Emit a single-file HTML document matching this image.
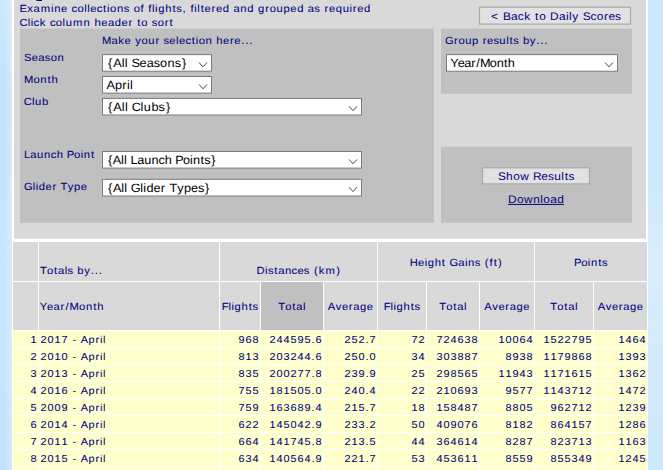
<!DOCTYPE html>
<html><head><meta charset="utf-8"><title>Flight Collections</title>
<style>
html,body{margin:0;padding:0}
body{width:663px;height:470px;overflow:hidden;position:relative;font-family:"Liberation Sans",sans-serif;
background:#c8e6fc;}
#pg div{position:absolute;box-sizing:content-box}
svg{position:absolute;left:0;top:0}
text{font-family:"Liberation Sans",sans-serif;white-space:pre;text-rendering:geometricPrecision}
</style></head><body>
<div id="pg">
<div style="left:648px;top:0;width:15px;height:470px;background:linear-gradient(180deg,#cbe8fc 0%,#cde9fc 35%,#d8eefd 56%,#d3ebfc 75%,#cee9fc 100%)"></div>
<div style="left:0;top:0;width:12px;height:470px;background:linear-gradient(90deg,rgba(255,255,255,0) 0%,rgba(255,255,255,0) 40%,rgba(255,255,255,.28) 100%),linear-gradient(180deg,#ceE9fc 0%,#c2e3fb 20%,#c7e5fc 50%,#c6e5fc 80%,#c2e3fb 100%)"></div>
<div style="left:12px;top:0px;width:636px;height:470px;background:#fff;"></div>
<div style="left:14px;top:0px;width:632px;height:238px;background:#d9d9d9;"></div>
<div style="left:36px;top:0px;width:2px;height:1px;background:#3a3a80;"></div>
<div style="left:38px;top:0px;width:4px;height:1px;background:#000066;"></div>
<div style="left:13px;top:242px;width:25px;height:39px;background:#d9d9d9;"></div>
<div style="left:39px;top:242px;width:180px;height:39px;background:#d9d9d9;"></div>
<div style="left:220px;top:242px;width:157px;height:39px;background:#d9d9d9;"></div>
<div style="left:378px;top:242px;width:156px;height:39px;background:#d9d9d9;"></div>
<div style="left:535px;top:242px;width:112px;height:39px;background:#d9d9d9;"></div>
<div style="left:13px;top:282px;width:25px;height:48px;background:#d9d9d9;"></div>
<div style="left:39px;top:282px;width:180px;height:48px;background:#d9d9d9;"></div>
<div style="left:220px;top:282px;width:40px;height:48px;background:#d9d9d9;"></div>
<div style="left:261px;top:282px;width:62px;height:48px;background:#c0c0c0;"></div>
<div style="left:324px;top:282px;width:53px;height:48px;background:#d9d9d9;"></div>
<div style="left:378px;top:282px;width:48px;height:48px;background:#d9d9d9;"></div>
<div style="left:427px;top:282px;width:52px;height:48px;background:#d9d9d9;"></div>
<div style="left:480px;top:282px;width:54px;height:48px;background:#d9d9d9;"></div>
<div style="left:535px;top:282px;width:58px;height:48px;background:#d9d9d9;"></div>
<div style="left:594px;top:282px;width:53px;height:48px;background:#d9d9d9;"></div>
<div style="left:13px;top:331px;width:25px;height:16px;background:#ffffcc;"></div>
<div style="left:39px;top:331px;width:180px;height:16px;background:#ffffcc;"></div>
<div style="left:220px;top:331px;width:40px;height:16px;background:#ffffcc;"></div>
<div style="left:261px;top:331px;width:62px;height:16px;background:#ffffcc;"></div>
<div style="left:324px;top:331px;width:53px;height:16px;background:#ffffcc;"></div>
<div style="left:378px;top:331px;width:48px;height:16px;background:#ffffcc;"></div>
<div style="left:427px;top:331px;width:52px;height:16px;background:#ffffcc;"></div>
<div style="left:480px;top:331px;width:54px;height:16px;background:#ffffcc;"></div>
<div style="left:535px;top:331px;width:58px;height:16px;background:#ffffcc;"></div>
<div style="left:594px;top:331px;width:53px;height:16px;background:#ffffcc;"></div>
<div style="left:13px;top:348px;width:25px;height:16px;background:#ffffcc;"></div>
<div style="left:39px;top:348px;width:180px;height:16px;background:#ffffcc;"></div>
<div style="left:220px;top:348px;width:40px;height:16px;background:#ffffcc;"></div>
<div style="left:261px;top:348px;width:62px;height:16px;background:#ffffcc;"></div>
<div style="left:324px;top:348px;width:53px;height:16px;background:#ffffcc;"></div>
<div style="left:378px;top:348px;width:48px;height:16px;background:#ffffcc;"></div>
<div style="left:427px;top:348px;width:52px;height:16px;background:#ffffcc;"></div>
<div style="left:480px;top:348px;width:54px;height:16px;background:#ffffcc;"></div>
<div style="left:535px;top:348px;width:58px;height:16px;background:#ffffcc;"></div>
<div style="left:594px;top:348px;width:53px;height:16px;background:#ffffcc;"></div>
<div style="left:13px;top:365px;width:25px;height:16px;background:#ffffcc;"></div>
<div style="left:39px;top:365px;width:180px;height:16px;background:#ffffcc;"></div>
<div style="left:220px;top:365px;width:40px;height:16px;background:#ffffcc;"></div>
<div style="left:261px;top:365px;width:62px;height:16px;background:#ffffcc;"></div>
<div style="left:324px;top:365px;width:53px;height:16px;background:#ffffcc;"></div>
<div style="left:378px;top:365px;width:48px;height:16px;background:#ffffcc;"></div>
<div style="left:427px;top:365px;width:52px;height:16px;background:#ffffcc;"></div>
<div style="left:480px;top:365px;width:54px;height:16px;background:#ffffcc;"></div>
<div style="left:535px;top:365px;width:58px;height:16px;background:#ffffcc;"></div>
<div style="left:594px;top:365px;width:53px;height:16px;background:#ffffcc;"></div>
<div style="left:13px;top:382px;width:25px;height:16px;background:#ffffcc;"></div>
<div style="left:39px;top:382px;width:180px;height:16px;background:#ffffcc;"></div>
<div style="left:220px;top:382px;width:40px;height:16px;background:#ffffcc;"></div>
<div style="left:261px;top:382px;width:62px;height:16px;background:#ffffcc;"></div>
<div style="left:324px;top:382px;width:53px;height:16px;background:#ffffcc;"></div>
<div style="left:378px;top:382px;width:48px;height:16px;background:#ffffcc;"></div>
<div style="left:427px;top:382px;width:52px;height:16px;background:#ffffcc;"></div>
<div style="left:480px;top:382px;width:54px;height:16px;background:#ffffcc;"></div>
<div style="left:535px;top:382px;width:58px;height:16px;background:#ffffcc;"></div>
<div style="left:594px;top:382px;width:53px;height:16px;background:#ffffcc;"></div>
<div style="left:13px;top:399px;width:25px;height:16px;background:#ffffcc;"></div>
<div style="left:39px;top:399px;width:180px;height:16px;background:#ffffcc;"></div>
<div style="left:220px;top:399px;width:40px;height:16px;background:#ffffcc;"></div>
<div style="left:261px;top:399px;width:62px;height:16px;background:#ffffcc;"></div>
<div style="left:324px;top:399px;width:53px;height:16px;background:#ffffcc;"></div>
<div style="left:378px;top:399px;width:48px;height:16px;background:#ffffcc;"></div>
<div style="left:427px;top:399px;width:52px;height:16px;background:#ffffcc;"></div>
<div style="left:480px;top:399px;width:54px;height:16px;background:#ffffcc;"></div>
<div style="left:535px;top:399px;width:58px;height:16px;background:#ffffcc;"></div>
<div style="left:594px;top:399px;width:53px;height:16px;background:#ffffcc;"></div>
<div style="left:13px;top:416px;width:25px;height:16px;background:#ffffcc;"></div>
<div style="left:39px;top:416px;width:180px;height:16px;background:#ffffcc;"></div>
<div style="left:220px;top:416px;width:40px;height:16px;background:#ffffcc;"></div>
<div style="left:261px;top:416px;width:62px;height:16px;background:#ffffcc;"></div>
<div style="left:324px;top:416px;width:53px;height:16px;background:#ffffcc;"></div>
<div style="left:378px;top:416px;width:48px;height:16px;background:#ffffcc;"></div>
<div style="left:427px;top:416px;width:52px;height:16px;background:#ffffcc;"></div>
<div style="left:480px;top:416px;width:54px;height:16px;background:#ffffcc;"></div>
<div style="left:535px;top:416px;width:58px;height:16px;background:#ffffcc;"></div>
<div style="left:594px;top:416px;width:53px;height:16px;background:#ffffcc;"></div>
<div style="left:13px;top:433px;width:25px;height:16px;background:#ffffcc;"></div>
<div style="left:39px;top:433px;width:180px;height:16px;background:#ffffcc;"></div>
<div style="left:220px;top:433px;width:40px;height:16px;background:#ffffcc;"></div>
<div style="left:261px;top:433px;width:62px;height:16px;background:#ffffcc;"></div>
<div style="left:324px;top:433px;width:53px;height:16px;background:#ffffcc;"></div>
<div style="left:378px;top:433px;width:48px;height:16px;background:#ffffcc;"></div>
<div style="left:427px;top:433px;width:52px;height:16px;background:#ffffcc;"></div>
<div style="left:480px;top:433px;width:54px;height:16px;background:#ffffcc;"></div>
<div style="left:535px;top:433px;width:58px;height:16px;background:#ffffcc;"></div>
<div style="left:594px;top:433px;width:53px;height:16px;background:#ffffcc;"></div>
<div style="left:13px;top:450px;width:25px;height:16px;background:#ffffcc;"></div>
<div style="left:39px;top:450px;width:180px;height:16px;background:#ffffcc;"></div>
<div style="left:220px;top:450px;width:40px;height:16px;background:#ffffcc;"></div>
<div style="left:261px;top:450px;width:62px;height:16px;background:#ffffcc;"></div>
<div style="left:324px;top:450px;width:53px;height:16px;background:#ffffcc;"></div>
<div style="left:378px;top:450px;width:48px;height:16px;background:#ffffcc;"></div>
<div style="left:427px;top:450px;width:52px;height:16px;background:#ffffcc;"></div>
<div style="left:480px;top:450px;width:54px;height:16px;background:#ffffcc;"></div>
<div style="left:535px;top:450px;width:58px;height:16px;background:#ffffcc;"></div>
<div style="left:594px;top:450px;width:53px;height:16px;background:#ffffcc;"></div>
<div style="left:13px;top:467px;width:25px;height:3px;background:#ffffcc;"></div>
<div style="left:39px;top:467px;width:180px;height:3px;background:#ffffcc;"></div>
<div style="left:220px;top:467px;width:40px;height:3px;background:#ffffcc;"></div>
<div style="left:261px;top:467px;width:62px;height:3px;background:#ffffcc;"></div>
<div style="left:324px;top:467px;width:53px;height:3px;background:#ffffcc;"></div>
<div style="left:378px;top:467px;width:48px;height:3px;background:#ffffcc;"></div>
<div style="left:427px;top:467px;width:52px;height:3px;background:#ffffcc;"></div>
<div style="left:480px;top:467px;width:54px;height:3px;background:#ffffcc;"></div>
<div style="left:535px;top:467px;width:58px;height:3px;background:#ffffcc;"></div>
<div style="left:594px;top:467px;width:53px;height:3px;background:#ffffcc;"></div>
</div>
<svg width="663" height="470" viewBox="0 0 663 470">
<rect x="14" y="237.9" width="632.0" height="0.8" fill="#d9d9d9"/>
<rect x="20.1" y="28.6" width="413.8" height="194.2" fill="#c0c0c0"/>
<rect x="441" y="28.6" width="191.0" height="65.1" fill="#c0c0c0"/>
<rect x="441" y="146.8" width="191.0" height="76.0" fill="#c0c0c0"/>
<rect x="102.5" y="54.6" width="109" height="16.6" fill="#fff" stroke="#7a7a7a" stroke-width="1"/>
<rect x="102.5" y="76.5" width="109" height="16.6" fill="#fff" stroke="#7a7a7a" stroke-width="1"/>
<rect x="102.5" y="98.4" width="259" height="16.6" fill="#fff" stroke="#7a7a7a" stroke-width="1"/>
<rect x="102.5" y="151.5" width="259" height="16.6" fill="#fff" stroke="#7a7a7a" stroke-width="1"/>
<rect x="102.5" y="179.3" width="259" height="16.7" fill="#fff" stroke="#7a7a7a" stroke-width="1"/>
<rect x="446.5" y="54.6" width="171" height="16.6" fill="#fff" stroke="#7a7a7a" stroke-width="1"/>
<rect x="479.5" y="7.2" width="151" height="16.9" fill="#e2e2e2" stroke="#a9a9a9" stroke-width="1.2"/>
<rect x="482.5" y="167.8" width="107" height="16.1" fill="#e2e2e2" stroke="#a9a9a9" stroke-width="1.2"/>
<text transform="translate(19.7 12.0) scale(1.08 1)" x="-0.22 6.95 12.80 19.46 29.05 31.98 38.31" font-size="10.4" fill="#000080" stroke="#000080" stroke-width="0.06">Examine</text>
<text transform="translate(71.4 12.0) scale(1.08 1)" x="0.08 5.59 11.86 14.68 17.42 23.46 29.33 33.05 35.85 42.23 48.46" font-size="10.4" fill="#000080" stroke="#000080" stroke-width="0.06">collections</text>
<text transform="translate(133.4 12.0) scale(1.08 1)" x="0.23 6.61" font-size="10.4" fill="#000080" stroke="#000080" stroke-width="0.06">of</text>
<text transform="translate(147.9 12.0) scale(1.08 1)" x="0.37 3.88 6.70 9.58 16.04 22.77 26.32 32.03" font-size="10.4" fill="#000080" stroke="#000080" stroke-width="0.06">flights,</text>
<text transform="translate(190.0 12.0) scale(1.08 1)" x="0.37 3.88 6.70 9.85 13.49 19.92 24.02 30.29" font-size="10.4" fill="#000080" stroke="#000080" stroke-width="0.06">filtered</text>
<text transform="translate(233.3 12.0) scale(1.08 1)" x="0.20 6.55 13.01" font-size="10.4" fill="#000080" stroke="#000080" stroke-width="0.06">and</text>
<text transform="translate(257.8 12.0) scale(1.08 1)" x="0.31 6.88 11.04 17.42 23.88 30.15 36.43" font-size="10.4" fill="#000080" stroke="#000080" stroke-width="0.06">grouped</text>
<text transform="translate(307.6 12.0) scale(1.08 1)" x="0.20 6.27" font-size="10.4" fill="#000080" stroke="#000080" stroke-width="0.06">as</text>
<text transform="translate(324.0 12.0) scale(1.08 1)" x="0.47 4.57 10.84 17.31 23.71 26.74 30.84 37.12" font-size="10.4" fill="#000080" stroke="#000080" stroke-width="0.06">required</text>
<text transform="translate(19.7 25.9) scale(1.08 1)" x="-0.17 7.43 10.25 12.89 18.61" font-size="10.4" fill="#000080" stroke="#000080" stroke-width="0.06">Click</text>
<text transform="translate(49.8 25.9) scale(1.08 1)" x="0.08 5.58 11.85 14.78 21.59 31.29" font-size="10.4" fill="#000080" stroke="#000080" stroke-width="0.06">column</text>
<text transform="translate(94.1 25.9) scale(1.08 1)" x="0.36 6.68 12.83 19.12 25.39 31.81" font-size="10.4" fill="#000080" stroke="#000080" stroke-width="0.06">header</text>
<text transform="translate(136.6 25.9) scale(1.08 1)" x="0.58 4.28" font-size="10.4" fill="#000080" stroke="#000080" stroke-width="0.06">to</text>
<text transform="translate(151.7 25.9) scale(1.08 1)" x="0.08 5.58 12.06 16.57" font-size="10.4" fill="#000080" stroke="#000080" stroke-width="0.06">sort</text>
<text transform="translate(102.0 44.0) scale(1.08 1)" x="-0.04 8.76 15.12 20.88" font-size="10.4" fill="#000080" stroke="#000080" stroke-width="0.06">Make</text>
<text transform="translate(134.8 44.0) scale(1.08 1)" x="0.41 6.23 12.54 19.10" font-size="10.4" fill="#000080" stroke="#000080" stroke-width="0.06">your</text>
<text transform="translate(163.5 44.0) scale(1.08 1)" x="0.05 5.45 11.62 14.31 20.29 26.11 29.80 32.55 38.86" font-size="10.4" fill="#000080" stroke="#000080" stroke-width="0.06">selection</text>
<text transform="translate(216.0 44.0) scale(1.08 1)" x="0.33 6.59 12.96 17.01 23.35 27.05 30.76" font-size="10.4" fill="#000080" stroke="#000080" stroke-width="0.06">here...</text>
<text transform="translate(445.2 44.0) scale(1.08 1)" x="-0.15 8.20 12.24 18.47 24.79" font-size="10.4" fill="#000080" stroke="#000080" stroke-width="0.06">Group</text>
<text transform="translate(482.3 44.0) scale(1.08 1)" x="0.41 4.40 10.30 15.81 22.10 25.17 28.62" font-size="10.4" fill="#000080" stroke="#000080" stroke-width="0.06">results</text>
<text transform="translate(522.7 44.0) scale(1.08 1)" x="0.24 6.64 12.60 16.26 19.92" font-size="10.4" fill="#000080" stroke="#000080" stroke-width="0.06">by...</text>
<text transform="translate(24.0 61.2) scale(1.08 1)" x="0.01 7.11 13.21 19.21 24.66 30.98" font-size="10.4" fill="#000080" stroke="#000080" stroke-width="0.06">Season</text>
<text transform="translate(24.0 83.2) scale(1.08 1)" x="-0.04 8.79 15.10 21.78 25.56" font-size="10.4" fill="#000080" stroke="#000080" stroke-width="0.06">Month</text>
<text transform="translate(24.0 105.2) scale(1.08 1)" x="-0.20 7.35 10.23 16.63" font-size="10.4" fill="#000080" stroke="#000080" stroke-width="0.06">Club</text>
<text transform="translate(24.0 158.3) scale(1.08 1)" x="-0.06 5.84 12.13 18.57 24.74 30.33" font-size="10.4" fill="#000080" stroke="#000080" stroke-width="0.06">Launch</text>
<text transform="translate(67.2 158.3) scale(1.08 1)" x="-0.40 6.34 12.56 15.45 22.12" font-size="10.4" fill="#000080" stroke="#000080" stroke-width="0.06">Point</text>
<text transform="translate(24.0 190.2) scale(1.08 1)" x="-0.10 8.13 10.92 13.76 19.96 26.33" font-size="10.4" fill="#000080" stroke="#000080" stroke-width="0.06">Glider</text>
<text transform="translate(60.5 190.2) scale(1.08 1)" x="-0.04 6.69 12.58 18.79" font-size="10.4" fill="#000080" stroke="#000080" stroke-width="0.06">Type</text>
<text transform="translate(106.9 67.0) scale(1.06 1)" x="1.07 5.99 13.98 16.91" font-size="12.0" fill="#000">{All</text>
<text transform="translate(132.0 67.0) scale(1.06 1)" x="-0.43 7.18 13.92 20.48 26.48 33.54 40.31 47.23" font-size="12.0" fill="#000">Seasons}</text>
<text transform="translate(106.9 88.9) scale(1.06 1)" x="-0.27 7.57 14.59 18.92 21.77" font-size="12.0" fill="#000">April</text>
<text transform="translate(106.9 110.8) scale(1.06 1)" x="1.09 6.06 14.07 17.03" font-size="12.0" fill="#000">{All</text>
<text transform="translate(132.2 110.8) scale(1.06 1)" x="-0.46 7.89 10.97 18.13 24.91 31.88" font-size="12.0" fill="#000">Clubs}</text>
<text transform="translate(106.9 163.9) scale(1.06 1)" x="0.93 5.53 13.26 16.06" font-size="12.0" fill="#000">{All</text>
<text transform="translate(130.9 163.9) scale(1.06 1)" x="-0.29 5.95 12.57 19.39 25.95 31.84" font-size="12.0" fill="#000">Launch</text>
<text transform="translate(175.8 163.9) scale(1.06 1)" x="-0.64 6.71 13.43 16.24 23.35 26.79 33.44" font-size="12.0" fill="#000">Points}</text>
<text transform="translate(106.9 191.7) scale(1.06 1)" x="0.99 5.74 13.59 16.45" font-size="12.0" fill="#000">{All</text>
<text transform="translate(131.4 191.7) scale(1.06 1)" x="-0.50 8.43 11.29 14.17 20.91 27.79" font-size="12.0" fill="#000">Glider</text>
<text transform="translate(169.5 191.7) scale(1.06 1)" x="-0.02 7.40 13.63 20.38 26.79 33.57" font-size="12.0" fill="#000">Types}</text>
<text transform="translate(450.9 67.0) scale(1.06 1)" x="-0.62 6.52 12.70 19.23 23.92 27.36 36.73 43.20 50.10 53.67" font-size="12.0" fill="#000">Year/Month</text>
<text transform="translate(489.7 19.8) scale(1.08 1)" x="1.12" font-size="11.0" fill="#000080">&lt;</text>
<text transform="translate(503.1 19.8) scale(1.08 1)" x="-0.04 7.38 13.63 19.52" font-size="11.0" fill="#000080">Back</text>
<text transform="translate(534.5 19.8) scale(1.08 1)" x="0.56 4.32" font-size="11.0" fill="#000080">to</text>
<text transform="translate(550.0 19.8) scale(1.08 1)" x="0.11 8.28 14.75 17.65 20.70" font-size="11.0" fill="#000080">Daily</text>
<text transform="translate(582.7 19.8) scale(1.08 1)" x="-0.05 7.25 12.91 19.61 23.79 30.01" font-size="11.0" fill="#000080">Scores</text>
<text transform="translate(498.0 180.0) scale(1.08 1)" x="-0.06 7.49 14.02 20.62" font-size="11.0" fill="#000080">Show</text>
<text transform="translate(533.2 180.0) scale(1.08 1)" x="-0.31 7.41 13.61 19.38 26.00 29.21 32.81" font-size="11.0" fill="#000080">Results</text>
<text transform="translate(508.0 202.5) scale(1.08 1)" x="0.08 8.23 14.81 23.35 29.95 32.74 39.09 45.52" font-size="11.0" fill="#000080">Download</text>
<rect x="508" y="203.9" width="56" height="1" fill="#000080"/>
<text transform="translate(40.0 274.0) scale(1.08 1)" x="-0.04 6.47 13.02 16.64 22.83 25.43" font-size="10.4" fill="#000080" stroke="#000080" stroke-width="0.06">Totals</text>
<text transform="translate(77.0 274.0) scale(1.08 1)" x="0.28 6.76 12.78 16.49 20.20" font-size="10.4" fill="#000080" stroke="#000080" stroke-width="0.06">by...</text>
<text transform="translate(256.4 274.0) scale(1.08 1)" x="0.17 8.09 10.70 16.51 20.13 26.42 32.58 37.98 43.96" font-size="10.4" fill="#000080" stroke="#000080" stroke-width="0.06">Distances</text>
<text transform="translate(313.4 274.0) scale(1.08 1)" x="0.58 5.04 11.28 21.14" font-size="10.4" fill="#000080" stroke="#000080" stroke-width="0.06">(km)</text>
<text transform="translate(409.6 266.0) scale(1.08 1)" x="0.07 7.79 13.96 16.79 23.19 29.86" font-size="10.4" fill="#000080" stroke="#000080" stroke-width="0.06">Height</text>
<text transform="translate(449.5 266.0) scale(1.08 1)" x="-0.10 8.06 14.25 17.14 23.31" font-size="10.4" fill="#000080" stroke="#000080" stroke-width="0.06">Gains</text>
<text transform="translate(484.2 266.0) scale(1.08 1)" x="0.58 4.97 8.77 12.80" font-size="10.4" fill="#000080" stroke="#000080" stroke-width="0.06">(ft)</text>
<text transform="translate(574.3 266.0) scale(1.08 1)" x="-0.40 6.34 12.56 15.45 22.12 25.63" font-size="10.4" fill="#000080" stroke="#000080" stroke-width="0.06">Points</text>
<text transform="translate(40.0 310.0) scale(1.08 1)" x="-0.34 6.41 12.50 18.90 23.67 27.39 36.21 42.53 49.21 52.99" font-size="10.4" fill="#000080" stroke="#000080" stroke-width="0.06">Year/Month</text>
<text transform="translate(221.9 310.0) scale(1.08 1)" x="-0.25 6.10 8.89 11.72 18.12 24.79 28.30" font-size="10.4" fill="#000080" stroke="#000080" stroke-width="0.06">Flights</text>
<text transform="translate(278.3 310.0) scale(1.08 1)" x="-0.04 6.47 13.02 16.64 22.83" font-size="10.4" fill="#000080" stroke="#000080" stroke-width="0.06">Total</text>
<text transform="translate(327.8 310.0) scale(1.08 1)" x="0.01 7.38 13.14 19.51 23.58 29.82 36.03" font-size="10.4" fill="#000080" stroke="#000080" stroke-width="0.06">Average</text>
<text transform="translate(383.9 310.0) scale(1.08 1)" x="-0.25 6.10 8.89 11.72 18.12 24.79 28.30" font-size="10.4" fill="#000080" stroke="#000080" stroke-width="0.06">Flights</text>
<text transform="translate(439.3 310.0) scale(1.08 1)" x="-0.04 6.47 13.02 16.64 22.83" font-size="10.4" fill="#000080" stroke="#000080" stroke-width="0.06">Total</text>
<text transform="translate(484.3 310.0) scale(1.08 1)" x="0.01 7.38 13.14 19.51 23.58 29.82 36.03" font-size="10.4" fill="#000080" stroke="#000080" stroke-width="0.06">Average</text>
<text transform="translate(550.3 310.0) scale(1.08 1)" x="-0.04 6.47 13.02 16.64 22.83" font-size="10.4" fill="#000080" stroke="#000080" stroke-width="0.06">Total</text>
<text transform="translate(597.8 310.0) scale(1.08 1)" x="0.01 7.38 13.14 19.51 23.58 29.82 36.03" font-size="10.4" fill="#000080" stroke="#000080" stroke-width="0.06">Average</text>
<text transform="translate(30.0 343.0) scale(1.08 1)" x="0.43" font-size="10.1" fill="#000080" stroke="#000080" stroke-width="0.06">1</text>
<text transform="translate(40.0 343.0) scale(1.08 1)" x="0.43 6.91 13.39 19.86" font-size="10.1" fill="#000080" stroke="#000080" stroke-width="0.06">2017</text>
<text transform="translate(71.9 343.0) scale(1.08 1)" x="0.63" font-size="10.1" fill="#000080" stroke="#000080" stroke-width="0.06">-</text>
<text transform="translate(80.7 343.0) scale(1.08 1)" x="0.11 7.33 13.81 17.93 20.73" font-size="10.1" fill="#000080" stroke="#000080" stroke-width="0.06">April</text>
<text transform="translate(238.0 343.0) scale(1.08 1)" x="0.43 6.91 13.39" font-size="10.1" fill="#000080" stroke="#000080" stroke-width="0.06">968</text>
<text transform="translate(269.0 343.0) scale(1.08 1)" x="0.43 6.91 13.39 19.86 26.34 32.82 39.32 43.00" font-size="10.1" fill="#000080" stroke="#000080" stroke-width="0.06">244595.6</text>
<text transform="translate(344.0 343.0) scale(1.08 1)" x="0.43 6.91 13.39 19.88 23.57" font-size="10.1" fill="#000080" stroke="#000080" stroke-width="0.06">252.7</text>
<text transform="translate(411.0 343.0) scale(1.08 1)" x="0.43 6.91" font-size="10.1" fill="#000080" stroke="#000080" stroke-width="0.06">72</text>
<text transform="translate(436.0 343.0) scale(1.08 1)" x="0.43 6.91 13.39 19.86 26.34 32.82" font-size="10.1" fill="#000080" stroke="#000080" stroke-width="0.06">724638</text>
<text transform="translate(498.0 343.0) scale(1.08 1)" x="0.43 6.91 13.39 19.86 26.34" font-size="10.1" fill="#000080" stroke="#000080" stroke-width="0.06">10064</text>
<text transform="translate(543.0 343.0) scale(1.08 1)" x="0.43 6.91 13.39 19.86 26.34 32.82 39.30" font-size="10.1" fill="#000080" stroke="#000080" stroke-width="0.06">1522795</text>
<text transform="translate(618.0 343.0) scale(1.08 1)" x="0.43 6.91 13.39 19.86" font-size="10.1" fill="#000080" stroke="#000080" stroke-width="0.06">1464</text>
<text transform="translate(30.0 360.0) scale(1.08 1)" x="0.43" font-size="10.1" fill="#000080" stroke="#000080" stroke-width="0.06">2</text>
<text transform="translate(40.0 360.0) scale(1.08 1)" x="0.43 6.91 13.39 19.86" font-size="10.1" fill="#000080" stroke="#000080" stroke-width="0.06">2010</text>
<text transform="translate(71.9 360.0) scale(1.08 1)" x="0.63" font-size="10.1" fill="#000080" stroke="#000080" stroke-width="0.06">-</text>
<text transform="translate(80.7 360.0) scale(1.08 1)" x="0.11 7.33 13.81 17.93 20.73" font-size="10.1" fill="#000080" stroke="#000080" stroke-width="0.06">April</text>
<text transform="translate(238.0 360.0) scale(1.08 1)" x="0.43 6.91 13.39" font-size="10.1" fill="#000080" stroke="#000080" stroke-width="0.06">813</text>
<text transform="translate(269.0 360.0) scale(1.08 1)" x="0.43 6.91 13.39 19.86 26.34 32.82 39.32 43.00" font-size="10.1" fill="#000080" stroke="#000080" stroke-width="0.06">203244.6</text>
<text transform="translate(344.0 360.0) scale(1.08 1)" x="0.43 6.91 13.39 19.88 23.57" font-size="10.1" fill="#000080" stroke="#000080" stroke-width="0.06">250.0</text>
<text transform="translate(411.0 360.0) scale(1.08 1)" x="0.43 6.91" font-size="10.1" fill="#000080" stroke="#000080" stroke-width="0.06">34</text>
<text transform="translate(436.0 360.0) scale(1.08 1)" x="0.43 6.91 13.39 19.86 26.34 32.82" font-size="10.1" fill="#000080" stroke="#000080" stroke-width="0.06">303887</text>
<text transform="translate(505.0 360.0) scale(1.08 1)" x="0.43 6.91 13.39 19.86" font-size="10.1" fill="#000080" stroke="#000080" stroke-width="0.06">8938</text>
<text transform="translate(543.0 360.0) scale(1.08 1)" x="0.43 6.91 13.39 19.86 26.34 32.82 39.30" font-size="10.1" fill="#000080" stroke="#000080" stroke-width="0.06">1179868</text>
<text transform="translate(618.0 360.0) scale(1.08 1)" x="0.43 6.91 13.39 19.86" font-size="10.1" fill="#000080" stroke="#000080" stroke-width="0.06">1393</text>
<text transform="translate(30.0 377.0) scale(1.08 1)" x="0.43" font-size="10.1" fill="#000080" stroke="#000080" stroke-width="0.06">3</text>
<text transform="translate(40.0 377.0) scale(1.08 1)" x="0.43 6.91 13.39 19.86" font-size="10.1" fill="#000080" stroke="#000080" stroke-width="0.06">2013</text>
<text transform="translate(71.9 377.0) scale(1.08 1)" x="0.63" font-size="10.1" fill="#000080" stroke="#000080" stroke-width="0.06">-</text>
<text transform="translate(80.7 377.0) scale(1.08 1)" x="0.11 7.33 13.81 17.93 20.73" font-size="10.1" fill="#000080" stroke="#000080" stroke-width="0.06">April</text>
<text transform="translate(238.0 377.0) scale(1.08 1)" x="0.43 6.91 13.39" font-size="10.1" fill="#000080" stroke="#000080" stroke-width="0.06">835</text>
<text transform="translate(269.0 377.0) scale(1.08 1)" x="0.43 6.91 13.39 19.86 26.34 32.82 39.32 43.00" font-size="10.1" fill="#000080" stroke="#000080" stroke-width="0.06">200277.8</text>
<text transform="translate(344.0 377.0) scale(1.08 1)" x="0.43 6.91 13.39 19.88 23.57" font-size="10.1" fill="#000080" stroke="#000080" stroke-width="0.06">239.9</text>
<text transform="translate(411.0 377.0) scale(1.08 1)" x="0.43 6.91" font-size="10.1" fill="#000080" stroke="#000080" stroke-width="0.06">25</text>
<text transform="translate(436.0 377.0) scale(1.08 1)" x="0.43 6.91 13.39 19.86 26.34 32.82" font-size="10.1" fill="#000080" stroke="#000080" stroke-width="0.06">298565</text>
<text transform="translate(498.0 377.0) scale(1.08 1)" x="0.43 6.91 13.39 19.86 26.34" font-size="10.1" fill="#000080" stroke="#000080" stroke-width="0.06">11943</text>
<text transform="translate(543.0 377.0) scale(1.08 1)" x="0.43 6.91 13.39 19.86 26.34 32.82 39.30" font-size="10.1" fill="#000080" stroke="#000080" stroke-width="0.06">1171615</text>
<text transform="translate(618.0 377.0) scale(1.08 1)" x="0.43 6.91 13.39 19.86" font-size="10.1" fill="#000080" stroke="#000080" stroke-width="0.06">1362</text>
<text transform="translate(30.0 394.0) scale(1.08 1)" x="0.43" font-size="10.1" fill="#000080" stroke="#000080" stroke-width="0.06">4</text>
<text transform="translate(40.0 394.0) scale(1.08 1)" x="0.43 6.91 13.39 19.86" font-size="10.1" fill="#000080" stroke="#000080" stroke-width="0.06">2016</text>
<text transform="translate(71.9 394.0) scale(1.08 1)" x="0.63" font-size="10.1" fill="#000080" stroke="#000080" stroke-width="0.06">-</text>
<text transform="translate(80.7 394.0) scale(1.08 1)" x="0.11 7.33 13.81 17.93 20.73" font-size="10.1" fill="#000080" stroke="#000080" stroke-width="0.06">April</text>
<text transform="translate(238.0 394.0) scale(1.08 1)" x="0.43 6.91 13.39" font-size="10.1" fill="#000080" stroke="#000080" stroke-width="0.06">755</text>
<text transform="translate(269.0 394.0) scale(1.08 1)" x="0.43 6.91 13.39 19.86 26.34 32.82 39.32 43.00" font-size="10.1" fill="#000080" stroke="#000080" stroke-width="0.06">181505.0</text>
<text transform="translate(344.0 394.0) scale(1.08 1)" x="0.43 6.91 13.39 19.88 23.57" font-size="10.1" fill="#000080" stroke="#000080" stroke-width="0.06">240.4</text>
<text transform="translate(411.0 394.0) scale(1.08 1)" x="0.43 6.91" font-size="10.1" fill="#000080" stroke="#000080" stroke-width="0.06">22</text>
<text transform="translate(436.0 394.0) scale(1.08 1)" x="0.43 6.91 13.39 19.86 26.34 32.82" font-size="10.1" fill="#000080" stroke="#000080" stroke-width="0.06">210693</text>
<text transform="translate(505.0 394.0) scale(1.08 1)" x="0.43 6.91 13.39 19.86" font-size="10.1" fill="#000080" stroke="#000080" stroke-width="0.06">9577</text>
<text transform="translate(543.0 394.0) scale(1.08 1)" x="0.43 6.91 13.39 19.86 26.34 32.82 39.30" font-size="10.1" fill="#000080" stroke="#000080" stroke-width="0.06">1143712</text>
<text transform="translate(618.0 394.0) scale(1.08 1)" x="0.43 6.91 13.39 19.86" font-size="10.1" fill="#000080" stroke="#000080" stroke-width="0.06">1472</text>
<text transform="translate(30.0 411.0) scale(1.08 1)" x="0.43" font-size="10.1" fill="#000080" stroke="#000080" stroke-width="0.06">5</text>
<text transform="translate(40.0 411.0) scale(1.08 1)" x="0.43 6.91 13.39 19.86" font-size="10.1" fill="#000080" stroke="#000080" stroke-width="0.06">2009</text>
<text transform="translate(71.9 411.0) scale(1.08 1)" x="0.63" font-size="10.1" fill="#000080" stroke="#000080" stroke-width="0.06">-</text>
<text transform="translate(80.7 411.0) scale(1.08 1)" x="0.11 7.33 13.81 17.93 20.73" font-size="10.1" fill="#000080" stroke="#000080" stroke-width="0.06">April</text>
<text transform="translate(238.0 411.0) scale(1.08 1)" x="0.43 6.91 13.39" font-size="10.1" fill="#000080" stroke="#000080" stroke-width="0.06">759</text>
<text transform="translate(269.0 411.0) scale(1.08 1)" x="0.43 6.91 13.39 19.86 26.34 32.82 39.32 43.00" font-size="10.1" fill="#000080" stroke="#000080" stroke-width="0.06">163689.4</text>
<text transform="translate(344.0 411.0) scale(1.08 1)" x="0.43 6.91 13.39 19.88 23.57" font-size="10.1" fill="#000080" stroke="#000080" stroke-width="0.06">215.7</text>
<text transform="translate(411.0 411.0) scale(1.08 1)" x="0.43 6.91" font-size="10.1" fill="#000080" stroke="#000080" stroke-width="0.06">18</text>
<text transform="translate(436.0 411.0) scale(1.08 1)" x="0.43 6.91 13.39 19.86 26.34 32.82" font-size="10.1" fill="#000080" stroke="#000080" stroke-width="0.06">158487</text>
<text transform="translate(505.0 411.0) scale(1.08 1)" x="0.43 6.91 13.39 19.86" font-size="10.1" fill="#000080" stroke="#000080" stroke-width="0.06">8805</text>
<text transform="translate(550.0 411.0) scale(1.08 1)" x="0.43 6.91 13.39 19.86 26.34 32.82" font-size="10.1" fill="#000080" stroke="#000080" stroke-width="0.06">962712</text>
<text transform="translate(618.0 411.0) scale(1.08 1)" x="0.43 6.91 13.39 19.86" font-size="10.1" fill="#000080" stroke="#000080" stroke-width="0.06">1239</text>
<text transform="translate(30.0 428.0) scale(1.08 1)" x="0.43" font-size="10.1" fill="#000080" stroke="#000080" stroke-width="0.06">6</text>
<text transform="translate(40.0 428.0) scale(1.08 1)" x="0.43 6.91 13.39 19.86" font-size="10.1" fill="#000080" stroke="#000080" stroke-width="0.06">2014</text>
<text transform="translate(71.9 428.0) scale(1.08 1)" x="0.63" font-size="10.1" fill="#000080" stroke="#000080" stroke-width="0.06">-</text>
<text transform="translate(80.7 428.0) scale(1.08 1)" x="0.11 7.33 13.81 17.93 20.73" font-size="10.1" fill="#000080" stroke="#000080" stroke-width="0.06">April</text>
<text transform="translate(238.0 428.0) scale(1.08 1)" x="0.43 6.91 13.39" font-size="10.1" fill="#000080" stroke="#000080" stroke-width="0.06">622</text>
<text transform="translate(269.0 428.0) scale(1.08 1)" x="0.43 6.91 13.39 19.86 26.34 32.82 39.32 43.00" font-size="10.1" fill="#000080" stroke="#000080" stroke-width="0.06">145042.9</text>
<text transform="translate(344.0 428.0) scale(1.08 1)" x="0.43 6.91 13.39 19.88 23.57" font-size="10.1" fill="#000080" stroke="#000080" stroke-width="0.06">233.2</text>
<text transform="translate(411.0 428.0) scale(1.08 1)" x="0.43 6.91" font-size="10.1" fill="#000080" stroke="#000080" stroke-width="0.06">50</text>
<text transform="translate(436.0 428.0) scale(1.08 1)" x="0.43 6.91 13.39 19.86 26.34 32.82" font-size="10.1" fill="#000080" stroke="#000080" stroke-width="0.06">409076</text>
<text transform="translate(505.0 428.0) scale(1.08 1)" x="0.43 6.91 13.39 19.86" font-size="10.1" fill="#000080" stroke="#000080" stroke-width="0.06">8182</text>
<text transform="translate(550.0 428.0) scale(1.08 1)" x="0.43 6.91 13.39 19.86 26.34 32.82" font-size="10.1" fill="#000080" stroke="#000080" stroke-width="0.06">864157</text>
<text transform="translate(618.0 428.0) scale(1.08 1)" x="0.43 6.91 13.39 19.86" font-size="10.1" fill="#000080" stroke="#000080" stroke-width="0.06">1286</text>
<text transform="translate(30.0 445.0) scale(1.08 1)" x="0.43" font-size="10.1" fill="#000080" stroke="#000080" stroke-width="0.06">7</text>
<text transform="translate(40.0 445.0) scale(1.08 1)" x="0.43 6.91 13.39 19.86" font-size="10.1" fill="#000080" stroke="#000080" stroke-width="0.06">2011</text>
<text transform="translate(71.9 445.0) scale(1.08 1)" x="0.63" font-size="10.1" fill="#000080" stroke="#000080" stroke-width="0.06">-</text>
<text transform="translate(80.7 445.0) scale(1.08 1)" x="0.11 7.33 13.81 17.93 20.73" font-size="10.1" fill="#000080" stroke="#000080" stroke-width="0.06">April</text>
<text transform="translate(238.0 445.0) scale(1.08 1)" x="0.43 6.91 13.39" font-size="10.1" fill="#000080" stroke="#000080" stroke-width="0.06">664</text>
<text transform="translate(269.0 445.0) scale(1.08 1)" x="0.43 6.91 13.39 19.86 26.34 32.82 39.32 43.00" font-size="10.1" fill="#000080" stroke="#000080" stroke-width="0.06">141745.8</text>
<text transform="translate(344.0 445.0) scale(1.08 1)" x="0.43 6.91 13.39 19.88 23.57" font-size="10.1" fill="#000080" stroke="#000080" stroke-width="0.06">213.5</text>
<text transform="translate(411.0 445.0) scale(1.08 1)" x="0.43 6.91" font-size="10.1" fill="#000080" stroke="#000080" stroke-width="0.06">44</text>
<text transform="translate(436.0 445.0) scale(1.08 1)" x="0.43 6.91 13.39 19.86 26.34 32.82" font-size="10.1" fill="#000080" stroke="#000080" stroke-width="0.06">364614</text>
<text transform="translate(505.0 445.0) scale(1.08 1)" x="0.43 6.91 13.39 19.86" font-size="10.1" fill="#000080" stroke="#000080" stroke-width="0.06">8287</text>
<text transform="translate(550.0 445.0) scale(1.08 1)" x="0.43 6.91 13.39 19.86 26.34 32.82" font-size="10.1" fill="#000080" stroke="#000080" stroke-width="0.06">823713</text>
<text transform="translate(618.0 445.0) scale(1.08 1)" x="0.43 6.91 13.39 19.86" font-size="10.1" fill="#000080" stroke="#000080" stroke-width="0.06">1163</text>
<text transform="translate(30.0 462.0) scale(1.08 1)" x="0.43" font-size="10.1" fill="#000080" stroke="#000080" stroke-width="0.06">8</text>
<text transform="translate(40.0 462.0) scale(1.08 1)" x="0.43 6.91 13.39 19.86" font-size="10.1" fill="#000080" stroke="#000080" stroke-width="0.06">2015</text>
<text transform="translate(71.9 462.0) scale(1.08 1)" x="0.63" font-size="10.1" fill="#000080" stroke="#000080" stroke-width="0.06">-</text>
<text transform="translate(80.7 462.0) scale(1.08 1)" x="0.11 7.33 13.81 17.93 20.73" font-size="10.1" fill="#000080" stroke="#000080" stroke-width="0.06">April</text>
<text transform="translate(238.0 462.0) scale(1.08 1)" x="0.43 6.91 13.39" font-size="10.1" fill="#000080" stroke="#000080" stroke-width="0.06">634</text>
<text transform="translate(269.0 462.0) scale(1.08 1)" x="0.43 6.91 13.39 19.86 26.34 32.82 39.32 43.00" font-size="10.1" fill="#000080" stroke="#000080" stroke-width="0.06">140564.9</text>
<text transform="translate(344.0 462.0) scale(1.08 1)" x="0.43 6.91 13.39 19.88 23.57" font-size="10.1" fill="#000080" stroke="#000080" stroke-width="0.06">221.7</text>
<text transform="translate(411.0 462.0) scale(1.08 1)" x="0.43 6.91" font-size="10.1" fill="#000080" stroke="#000080" stroke-width="0.06">53</text>
<text transform="translate(436.0 462.0) scale(1.08 1)" x="0.43 6.91 13.39 19.86 26.34 32.82" font-size="10.1" fill="#000080" stroke="#000080" stroke-width="0.06">453611</text>
<text transform="translate(505.0 462.0) scale(1.08 1)" x="0.43 6.91 13.39 19.86" font-size="10.1" fill="#000080" stroke="#000080" stroke-width="0.06">8559</text>
<text transform="translate(550.0 462.0) scale(1.08 1)" x="0.43 6.91 13.39 19.86 26.34 32.82" font-size="10.1" fill="#000080" stroke="#000080" stroke-width="0.06">855349</text>
<text transform="translate(618.0 462.0) scale(1.08 1)" x="0.43 6.91 13.39 19.86" font-size="10.1" fill="#000080" stroke="#000080" stroke-width="0.06">1245</text>
<path d="M199.0 62.5 L203.0 66.9 L207.0 62.5" fill="none" stroke="#484848" stroke-width="1"/>
<path d="M199.0 84.4 L203.0 88.8 L207.0 84.4" fill="none" stroke="#484848" stroke-width="1"/>
<path d="M349.0 106.3 L353.0 110.7 L357.0 106.3" fill="none" stroke="#484848" stroke-width="1"/>
<path d="M349.0 159.4 L353.0 163.8 L357.0 159.4" fill="none" stroke="#484848" stroke-width="1"/>
<path d="M349.0 187.2 L353.0 191.6 L357.0 187.2" fill="none" stroke="#484848" stroke-width="1"/>
<path d="M605.0 62.5 L609.0 66.9 L613.0 62.5" fill="none" stroke="#484848" stroke-width="1"/>
</svg>
</body></html>
